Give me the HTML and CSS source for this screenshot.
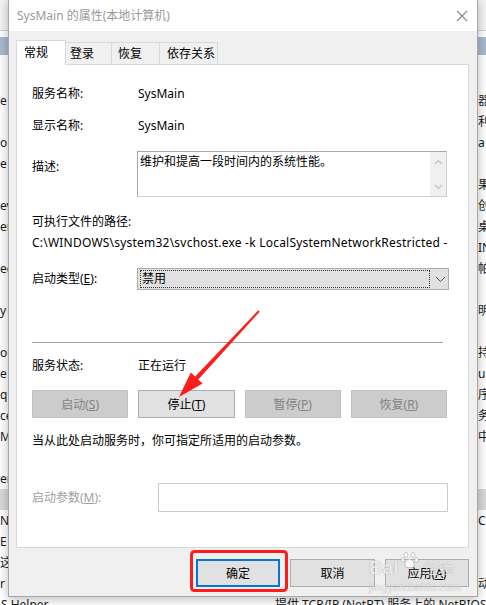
FILE: index.html
```html
<!DOCTYPE html>
<html lang="zh-CN">
<head>
<meta charset="utf-8">
<title>SysMain 的属性(本地计算机)</title>
<link rel="stylesheet" href="styles.css">
</head>
<body>
<div class="desk">
  <div class="desk-top"></div>
  <div class="desk-head"></div>
  <div class="rows">
    <div class="row"><span class="l">e</span><span class="m"></span><span class="r">器</span></div>
    <div class="row"><span class="l"></span><span class="m"></span><span class="r">利</span></div>
    <div class="row"><span class="l">o</span><span class="m"></span><span class="r">a</span></div>
    <div class="row"><span class="l">e</span><span class="m"></span><span class="r"></span></div>
    <div class="row"><span class="l"></span><span class="m"></span><span class="r">果</span></div>
    <div class="row"><span class="l">ev</span><span class="m"></span><span class="r">创</span></div>
    <div class="row"><span class="l">en</span><span class="m"></span><span class="r">桌</span></div>
    <div class="row"><span class="l"></span><span class="m"></span><span class="r">IN</span></div>
    <div class="row"><span class="l">ec</span><span class="m"></span><span class="r">帕</span></div>
    <div class="row"><span class="l"></span><span class="m"></span><span class="r"></span></div>
    <div class="row"><span class="l">y</span><span class="m"></span><span class="r">明</span></div>
    <div class="row"><span class="l"></span><span class="m"></span><span class="r"></span></div>
    <div class="row"><span class="l">or</span><span class="m"></span><span class="r">持</span></div>
    <div class="row"><span class="l">e</span><span class="m"></span><span class="r">u</span></div>
    <div class="row"><span class="l">qu</span><span class="m"></span><span class="r">序</span></div>
    <div class="row"><span class="l">ce</span><span class="m"></span><span class="r">务</span></div>
    <div class="row"><span class="l">M</span><span class="m"></span><span class="r">中</span></div>
    <div class="row"><span class="l"></span><span class="m"></span><span class="r"></span></div>
    <div class="row"><span class="l">er</span><span class="m"></span><span class="r"></span></div>
    <div class="row sel"><span class="l"></span><span class="m"></span><span class="r"></span></div>
    <div class="row"><span class="l">N</span><span class="m"></span><span class="r">C</span></div>
    <div class="row"><span class="l">E</span><span class="m"></span><span class="r"></span></div>
    <div class="row"><span class="l">这</span><span class="m"></span><span class="r"></span></div>
    <div class="row"><span class="l">r</span><span class="m"></span><span class="r">动</span></div>
    <div class="row"><span class="name">S Helper</span><span class="desc">提供 TCP/IP (NetBT) 服务上的 NetBIOS 名称解析</span></div>
  </div>
</div>

<div class="dialog">
  <div class="titlebar">
    <span class="title">SysMain 的属性(本地计算机)</span>
    <span class="close">
      <svg width="12" height="12" viewBox="0 0 12 12"><path d="M1 1L11 11M11 1L1 11" stroke="#8a8a8a" stroke-width="1.1" fill="none"/></svg>
    </span>
  </div>
  <div class="body">
    <div class="tabs">
      <div class="tab active">常规</div>
      <div class="tab t2">登录</div>
      <div class="tab t3">恢复</div>
      <div class="tab t4">依存关系</div>
    </div>
    <div class="panel">
      <div class="field r1"><span class="lab">服务名称:</span><span class="val">SysMain</span></div>
      <div class="field r2"><span class="lab">显示名称:</span><span class="val">SysMain</span></div>
      <div class="field r3">
        <span class="lab lab-desc">描述:</span>
        <div class="descbox">
          <div class="desctext">维护和提高一段时间内的系统性能。</div>
          <div class="sbar">
            <svg width="9" height="6" viewBox="0 0 9 6"><path d="M1 5L4.5 1.5L8 5" stroke="#c2c2c2" stroke-width="1.2" fill="none"/></svg>
            <svg width="9" height="6" viewBox="0 0 9 6"><path d="M1 1L4.5 4.5L8 1" stroke="#c2c2c2" stroke-width="1.2" fill="none"/></svg>
          </div>
        </div>
      </div>
      <div class="pathlab">可执行文件的路径:</div>
      <div class="path">C:\WINDOWS\system32\svchost.exe -k LocalSystemNetworkRestricted -</div>
      <div class="field r4">
        <span class="lab">启动类型(<u>E</u>):</span>
        <div class="combo">
          <div class="focus">禁用</div>
          <svg class="chev" width="11" height="7" viewBox="0 0 11 7"><path d="M1 1L5.5 5.5L10 1" stroke="#555" stroke-width="1" fill="none"/></svg>
        </div>
      </div>
      <div class="sep"></div>
      <div class="field r5"><span class="lab">服务状态:</span><span class="val">正在运行</span></div>
      <div class="btnrow">
        <div class="btn dis">启动(<u>S</u>)</div>
        <div class="btn">停止(<u>T</u>)</div>
        <div class="btn dis">暂停(<u>P</u>)</div>
        <div class="btn dis">恢复(<u>R</u>)</div>
      </div>
      <div class="note">当从此处启动服务时，你可指定所适用的启动参数。</div>
      <div class="field r6">
        <span class="lab lab-param">启动参数(<u>M</u>):</span>
        <div class="param"></div>
      </div>
    </div>
    <div class="footer">
      <div class="btn fbtn def">确定</div>
      <div class="btn fbtn mid">取消</div>
      <div class="btn fbtn">应用(<u>A</u>)</div>
    </div>
  </div>
</div>

<svg class="annot" width="486" height="605" viewBox="0 0 486 605">
  <rect x="191.5" y="551.5" width="95" height="39" rx="3" ry="3" fill="none" stroke="#ff1c1c" stroke-width="3"/>
  <polygon points="259.7,311.7 198.3,379.5 202.6,383.4 179,397 190.8,372.6 195.1,376.5 258.3,310.3" fill="#ff1c1c"/>
</svg>

<div class="watermark">
  <div class="wm-top">
    <span class="wm-bai">Bai</span>
    <svg class="paw" width="20" height="20" viewBox="0 0 20 20">
      <g fill="rgba(255,255,255,0.8)" stroke="rgba(120,120,120,0.45)" stroke-width="0.8">
        <ellipse cx="6" cy="5" rx="2" ry="2.6"/>
        <ellipse cx="13" cy="5" rx="2" ry="2.6"/>
        <ellipse cx="2.8" cy="10" rx="1.8" ry="2.3"/>
        <ellipse cx="16.5" cy="10" rx="1.8" ry="2.3"/>
        <path d="M9.5 9C6.5 9 4.5 13.5 5 16C5.5 18 8 17.5 9.5 17.5C11 17.5 13.5 18 14 16C14.5 13.5 12.5 9 9.5 9Z"/>
      </g>
    </svg>
    <span class="wm-jy">经验</span>
  </div>
  <div class="wm-url">jingyan.baidu.com</div>
</div>
</body>
</html>
```
FILE: styles.css
```css
* { box-sizing: border-box; margin: 0; padding: 0; }
html, body { width: 486px; height: 605px; overflow: hidden; }
body {
  position: relative;
  background: #ffffff;
  font-family: "Noto Sans", "Noto Sans CJK SC", sans-serif;
  font-size: 12px;
  color: #000;
}
u { text-decoration: underline; text-underline-offset: 1px; }

/* background services window */
.desk { height: 605px; overflow: hidden; }
.desk-top { height: 31px; background: #f4f4f4; border-bottom: 1px solid #cfcfcf; }
.desk-head { height: 18px; margin-top: 6px; background: #a9bace; }
.rows { margin-top: 35px; }
.row { display: flex; height: 21px; line-height: 21px; white-space: nowrap; color: #1a1a1a; }
.row .l { width: 8px; overflow: hidden; }
.row .m { width: 470px; }
.row .r { width: 8px; overflow: hidden; }
.row.sel { background: #d9d9d9; }
.row .name { flex: none; width: 275px; padding-left: 1px; }
.row .desc { flex: none; }

/* dialog */
.dialog {
  position: absolute;
  left: 8px;
  top: -1px;
  width: 470px;
  height: 598px;
  border: 1px solid #a8a8a8;
  background: #f0f0f0;
  box-shadow: 0 2px 10px rgba(0,0,0,0.28);
  display: flex;
  flex-direction: column;
}
.titlebar {
  height: 31px;
  background: #ffffff;
  display: flex;
  align-items: center;
  justify-content: space-between;
}
.title { padding-left: 8px; color: #9a9a9a; line-height: 16px; }
.close { width: 30px; height: 30px; display: flex; align-items: center; justify-content: center; }

.body { padding: 9px 8px 0 7px; }

.tabs { display: flex; align-items: flex-end; height: 24px; }
.tab {
  height: 22px;
  line-height: 21px;
  background: #f0f0f0;
  border: 1px solid #d9d9d9;
  border-bottom: 0;
  border-left: 0;
  white-space: nowrap;
}
.tab.active {
  position: relative;
  z-index: 1;
  height: 25px;
  margin-bottom: -1px;
  width: 50px;
  padding-left: 7px;
  line-height: 23px;
  background: #ffffff;
  border-left: 1px solid #d9d9d9;
}
.tab.t2 { width: 46px; padding-left: 4px; }
.tab.t3 { width: 48px; padding-left: 6px; }
.tab.t4 { width: 58px; padding-left: 7px; }

.panel {
  height: 484px;
  background: #ffffff;
  border: 1px solid #d9d9d9;
  padding: 21px 21px 0 15px;
}
.field { display: grid; grid-template-columns: 105px 1fr; align-items: center; }
.lab, .val { line-height: 16px; white-space: nowrap; }
.val { padding-left: 1px; }
.r2 { margin-top: 16px; }
.r3 { margin-top: 17px; align-items: start; }
.lab-desc { margin-top: 8px; }
.descbox {
  height: 46px;
  border: 1px solid #a8a8a8;
  border-right-color: #d0d0d0;
  border-bottom-color: #d0d0d0;
  display: flex;
}
.desctext { flex: 1; padding: 2px 2px; line-height: 16px; }
.sbar {
  width: 16px;
  background: #f0f0f0;
  display: flex;
  flex-direction: column;
  align-items: center;
  justify-content: space-between;
  padding: 7px 0 6px;
}
.pathlab { margin-top: 17px; line-height: 16px; }
.path { margin-top: 5px; line-height: 16px; white-space: nowrap; letter-spacing: 0.22px; }
.r4 { margin-top: 17px; }
.combo {
  width: 312px;
  height: 22px;
  background: #e1e1e1;
  border: 1px solid #adadad;
  display: flex;
  align-items: center;
  padding: 1px 0 1px 2px;
}
.focus {
  width: 290px;
  height: 18px;
  border: 1px dotted #333;
  line-height: 16px;
  padding-left: 1px;
}
.chev { margin-left: 5px; }
.sep { margin-top: 52px; margin-right: 4px; height: 1px; background: #a0a0a0; }
.r5 { margin-top: 15px; }
.btnrow {
  margin-top: 16px;
  display: grid;
  grid-template-columns: repeat(4, 1fr);
  column-gap: 10px;
}
.btn {
  height: 28px;
  background: #e1e1e1;
  border: 1px solid #adadad;
  display: flex;
  align-items: center;
  justify-content: center;
  white-space: nowrap;
}
.btn.dis { background: #cccccc; border-color: #bfbfbf; color: #838383; }
.note { margin-top: 15px; line-height: 16px; }
.r6 { margin-top: 34px; grid-template-columns: 126px 1fr; }
.lab-param { color: #a0a0a0; }
.param { height: 29px; width: 290px; border: 1px solid #cccccc; background: #fff; }

.footer {
  margin-top: 11px;
  display: flex;
  justify-content: flex-end;
  gap: 10px;
}
.fbtn { width: 84px; }
.fbtn.mid { width: 85px; }
.fbtn.def { border: 2px solid #0078d7; }

/* overlays */
.annot { position: absolute; left: 0; top: 0; pointer-events: none; }
.watermark {
  position: absolute;
  left: 369px;
  top: 549px;
  width: 92px;
  pointer-events: none;
  color: rgba(255,255,255,0.78);
  text-shadow: 0 0 1px rgba(90,90,90,0.55);
}
.wm-top { display: flex; align-items: flex-end; gap: 1px; height: 30px; }
.wm-bai { font-family: "Liberation Sans", sans-serif; font-weight: bold; font-size: 19px; line-height: 22px; }
.paw { margin-bottom: 9px; }
.wm-jy { font-size: 15px; line-height: 22px; margin-left: 3px; }
.wm-url { font-size: 10px; line-height: 12px; margin-top: 2px; letter-spacing: 0.3px; }
```
